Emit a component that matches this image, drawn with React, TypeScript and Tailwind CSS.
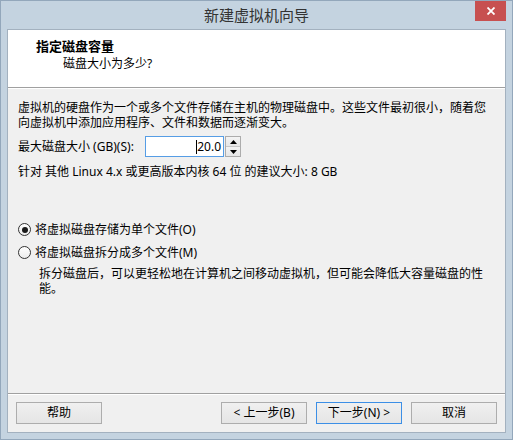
function Btn({ children, focused }: { children: React.ReactNode; focused?: boolean }) {
  return (
    <button
      className={
        "w-[86px] h-[22px] flex items-center justify-center border bg-linear-to-b from-[#f0f0f0] to-[#e5e5e5] text-[12px] leading-none text-black " +
        (focused ? "border-[#3c8fe6]" : "border-[#adadad]")
      }
    >
      {children}
    </button>
  )
}

function Radio({ checked, label }: { checked?: boolean; label: string }) {
  return (
    <div className="h-[23px] flex items-center gap-[4px]">
      <span className="w-[13px] h-[13px] rounded-full border border-[#333333] bg-linear-to-b from-white to-[#ececec] flex items-center justify-center">
        {checked && <span className="w-[6px] h-[6px] rounded-full bg-[#1a1a1a]" />}
      </span>
      <span className="leading-[16px]">{label}</span>
    </div>
  )
}

function Spinner() {
  return (
    <div className="ml-[1px] w-[16px] h-[21px] border border-[#acacac] flex flex-col bg-[#f0f0f0]">
      <div className="flex-1 flex items-center justify-center border-b border-[#c8c8c8] bg-linear-to-b from-[#f4f4f4] to-[#e6e6e6]">
        <svg width="7" height="4" viewBox="0 0 7 4">
          <path d="M0 4 L3.5 0 L7 4 Z" fill="#000" />
        </svg>
      </div>
      <div className="flex-1 flex items-center justify-center bg-linear-to-b from-[#f4f4f4] to-[#e6e6e6]">
        <svg width="7" height="4" viewBox="0 0 7 4">
          <path d="M0 0 L7 0 L3.5 4 Z" fill="#000" />
        </svg>
      </div>
    </div>
  )
}

export default function App() {
  return (
    <div className="w-[513px] h-[440px] bg-[#c4d3e0] border border-[#93a7bb] px-[6px] pb-[6px] flex flex-col font-['Noto_Sans','Noto_Sans_CJK_SC',sans-serif] text-[12px] text-black select-none">
      {/* title bar */}
      <div className="h-[28px] grid grid-cols-[1fr_auto_1fr]">
        <div />
        <div className="self-center text-[15px] leading-[18px] text-[#333333]">新建虚拟机向导</div>
        <div className="justify-self-end self-start w-[31px] h-[20px] bg-[#c75050] flex items-center justify-center">
          <svg width="8" height="8" viewBox="0 0 8 8">
            <path d="M0.5 0.5 L7.5 7.5 M7.5 0.5 L0.5 7.5" stroke="#fff" strokeWidth="1.8" />
          </svg>
        </div>
      </div>

      {/* client area */}
      <div className="flex-1 border border-[#a3b1bf] bg-[#f0f0f0] flex flex-col">
        <div className="h-[57px] bg-white pl-[28px] pt-[8px]">
          <div className="text-[13px] leading-[16px] font-bold">指定磁盘容量</div>
          <div className="mt-[2px] pl-[27px] leading-[16px]">磁盘大小为多少?</div>
        </div>
        <div className="h-px bg-[#a0a0a0]" />
        <div className="h-px bg-white" />

        <div className="flex-1 pl-[10px] pr-[16px] pt-[11px]">
          <p className="leading-[15px]">
            虚拟机的硬盘作为一个或多个文件存储在主机的物理磁盘中。这些文件最初很小，随着您向虚拟机中添加应用程序、文件和数据而逐渐变大。
          </p>

          <div className="mt-[6px] h-[21px] flex items-center">
            <span className="w-[127px] leading-[16px]">最大磁盘大小 (GB)(S):</span>
            <div className="w-[79px] h-[21px] border border-[#569de5] bg-white flex items-center justify-end pr-[2px]">
              <span className="w-px h-[14px] bg-black" />
              <span className="leading-[16px]">20.0</span>
            </div>
            <Spinner />
          </div>

          <p className="mt-[7px] leading-[16px]">针对 其他 Linux 4.x 或更高版本内核 64 位 的建议大小: 8 GB</p>

          <div className="mt-[38px]">
            <Radio checked label="将虚拟磁盘存储为单个文件(O)" />
            <Radio label="将虚拟磁盘拆分成多个文件(M)" />
          </div>
          <p className="mt-[2px] pl-[21px] leading-[15px]">
            拆分磁盘后，可以更轻松地在计算机之间移动虚拟机，但可能会降低大容量磁盘的性能。
          </p>
        </div>

        <div className="h-px bg-[#a0a0a0]" />
        <div className="h-px bg-white" />
        <div className="px-[8px] pt-[7px] pb-[8px] flex">
          <Btn>帮助</Btn>
          <div className="ml-auto flex gap-[9px]">
            <Btn>&lt; 上一步(B)</Btn>
            <Btn focused>下一步(N) &gt;</Btn>
            <Btn>取消</Btn>
          </div>
        </div>
      </div>
    </div>
  )
}
